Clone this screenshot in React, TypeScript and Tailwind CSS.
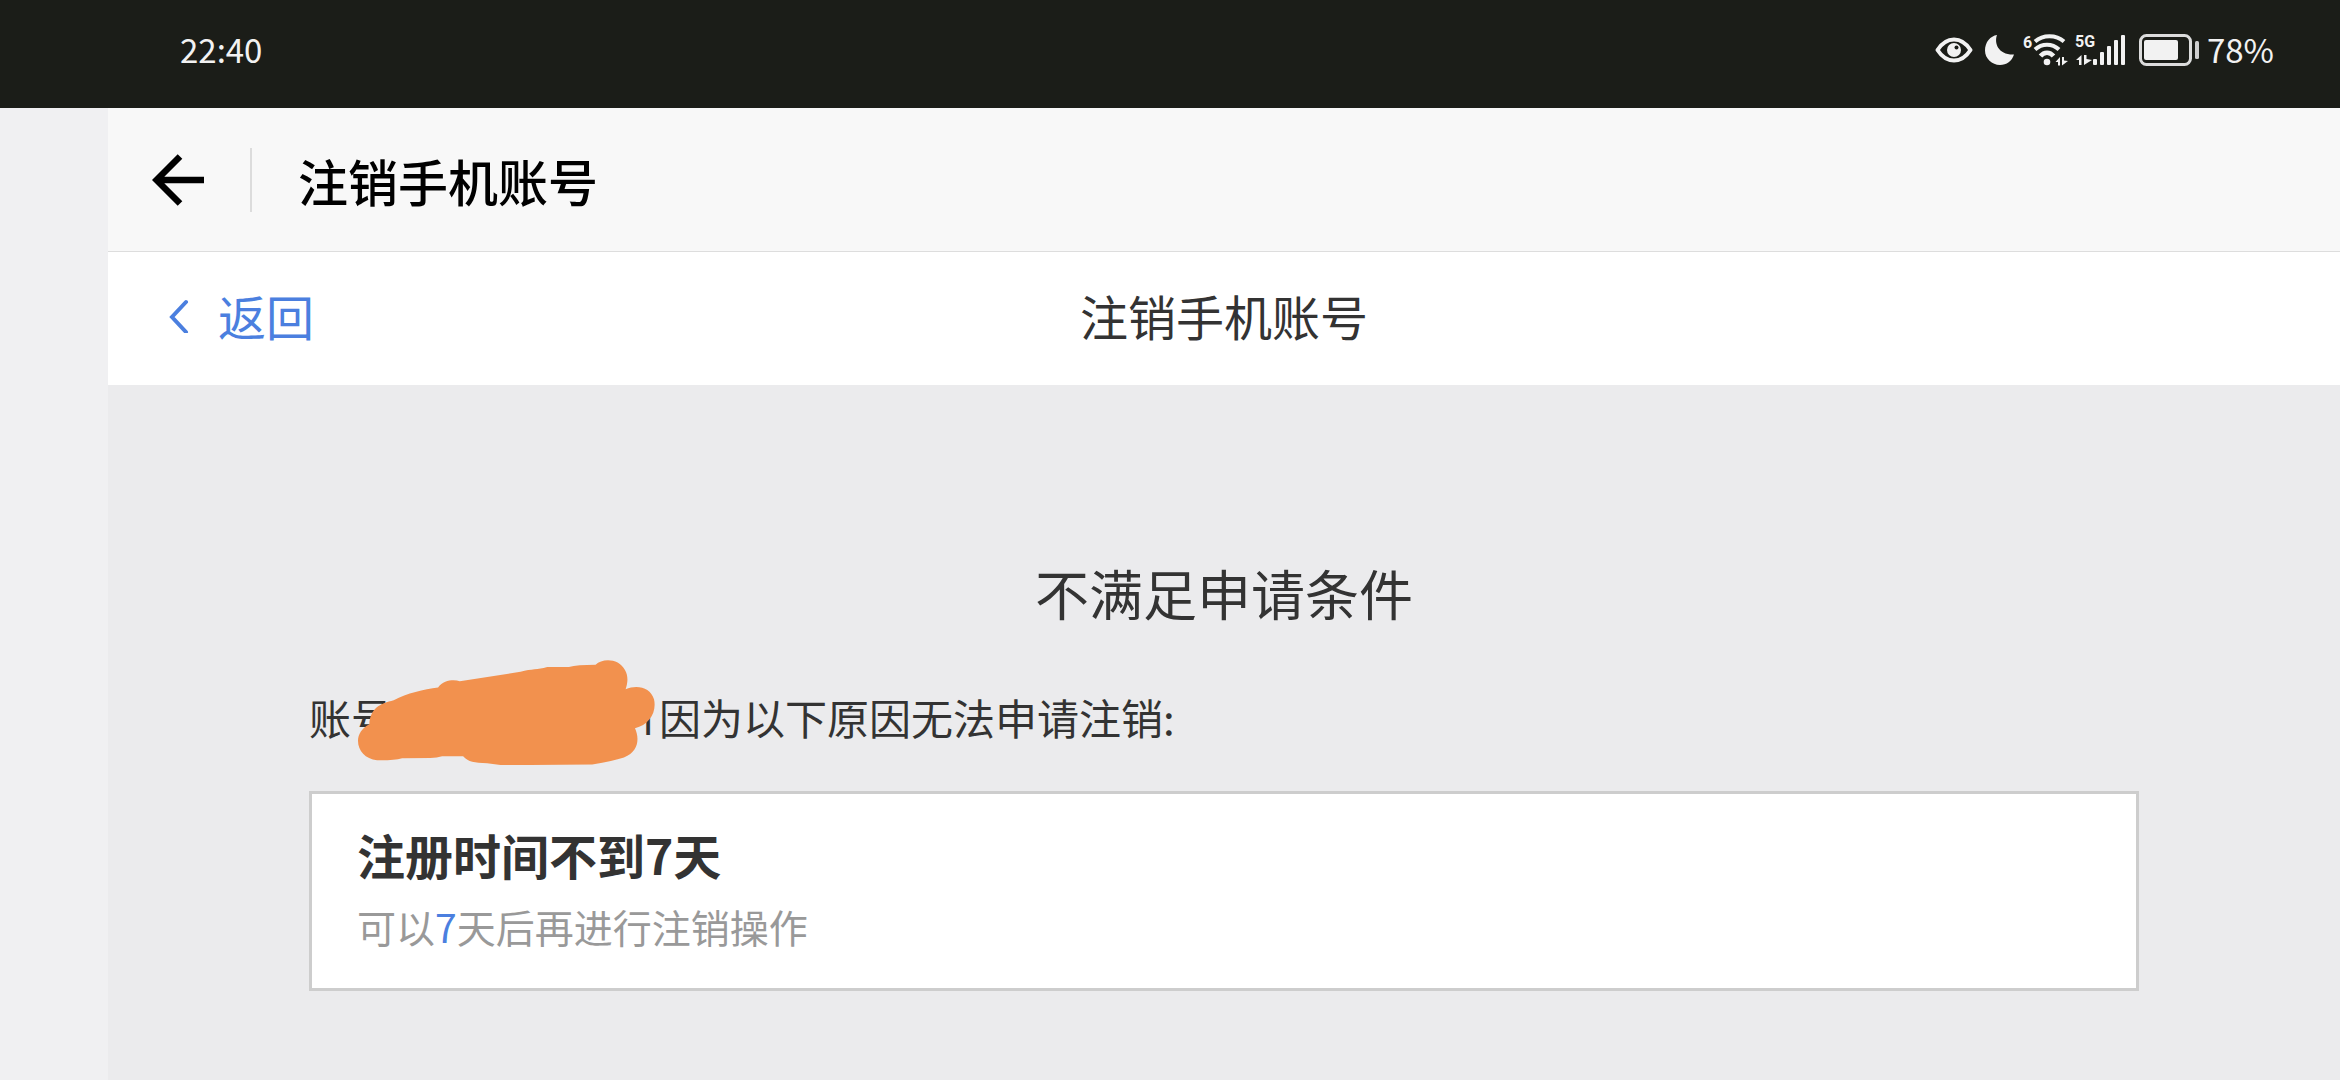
function StatusIcons() {
  return (
    <div className="flex items-center text-[#f2f2f2]">
      {/* eye */}
      <svg className="w-[38px] h-8 mr-3" viewBox="0 0 38 32" fill="none" role="img" aria-label="护眼">
        <path d="M2.500 16C7 9 12.500 5.500 19 5.500S31 9 35.500 16C31 23 25.500 26.500 19 26.500S7 23 2.500 16Z" stroke="currentColor" strokeWidth="4" strokeLinejoin="round" />
        <circle cx="19" cy="16" r="7" fill="currentColor" />
        <circle cx="21.500" cy="13.500" r="2" fill="#1b1d18" />
      </svg>
      {/* moon */}
      <svg className="w-[30px] h-8 mr-2" viewBox="0 0 30 32" fill="currentColor" role="img" aria-label="勿扰">
        <path d="M12 1C9 9 13 21 29 20.500C27 27 21.500 31 15 31C7 31 0 24.500 0 16.500C0 8 5.500 2 12 1Z" />
      </svg>
      {/* wifi */}
      <svg className="w-[44px] h-8 mr-2 overflow-visible" viewBox="0 0 44 32" fill="none" role="img" aria-label="WLAN">
        <text x="0" y="14" fill="currentColor" className="text-[16px] font-bold font-['Roboto',sans-serif]">6</text>
        <path d="M12 7.500C20 0.500 33 0.500 41 7.500" stroke="currentColor" strokeWidth="4" />
        <path d="M12 15.500C19 9 29 9 36 15.500" stroke="currentColor" strokeWidth="4" />
        <path d="M17.500 22C21 17.500 27 17.500 30.500 22" stroke="currentColor" strokeWidth="4.500" />
        <circle cx="24" cy="28" r="3.300" fill="currentColor" />
        <path d="M32.500 28L37 23V31.500H35V28ZM39 23H41V26.500L45 27L39 31.500Z" fill="currentColor" />
      </svg>
      {/* 5G signal */}
      <svg className="w-[52px] h-8 mr-3 overflow-visible" viewBox="0 0 52 32" fill="currentColor" role="img" aria-label="5G">
        <text x="0" y="13" className="text-[16px] font-bold font-['Roboto',sans-serif]">5G</text>
        <path d="M1 26L6.500 21V31H4V26ZM9 21H11.500V25L17 26L9 31Z" />
        <rect x="18" y="25" width="4" height="6" rx="1" />
        <rect x="25" y="18" width="4" height="13" rx="1" />
        <rect x="32" y="12" width="4" height="19" rx="1" />
        <rect x="39" y="6" width="4" height="25" rx="1" />
        <rect x="46" y="1" width="4" height="30" rx="1" />
      </svg>
      {/* battery */}
      <svg className="w-[60px] h-8 mr-2" viewBox="0 0 60 32" fill="none" role="img" aria-label="电量">
        <rect x="1.500" y="1.500" width="50" height="29" rx="6" stroke="#dcdcdc" strokeWidth="3" />
        <rect x="5" y="6" width="34" height="20" rx="2" fill="currentColor" />
        <rect x="56" y="7" width="4" height="18" rx="1.500" fill="#cfcfcf" />
      </svg>
      <span>78%</span>
    </div>
  );
}

function Scribble() {
  return (
    <svg
      className="absolute -left-9 -top-7 w-[299px] h-[107px] max-w-none"
      viewBox="200 55 896 320"
      fill="#f2914e"
      aria-hidden="true"
    >
      <path d="M237 250C240 200 270 188 310 178C350 157 400 146 443 140C460 117 490 116 508 121L690 93C725 84 740 88 770 79L835 79Q860 72 915 72C935 52 985 52 1003 88C1013 105 1012 125 1005 145C1040 130 1080 140 1090 175C1099 215 1075 252 1033 262C1046 290 1046 332 1000 350Q960 362 905 371Q760 373 630 372L590 367C550 365 535 364 518 346L455 346Q440 351 420 351L335 352Q310 359 260 358C225 355 203 330 203 300C203 280 215 262 237 250Z" />
    </svg>
  );
}

function App() {
  return (
    <div className="min-h-screen flex flex-col bg-[#ebebed] text-[#333333] font-['Noto_Sans_CJK_SC',sans-serif]">
      <div className="h-[108px] shrink-0 bg-[#1b1d18] text-[#f2f2f2] pl-[180px] pr-[66px] pb-2 flex items-center justify-between text-[33px]">
        <span>22:40</span>
        <StatusIcons />
      </div>

      <div className="flex-1 flex">
        <div className="w-[108px] shrink-0 bg-[#f0f0f2]" />

        <div className="flex-1">
          <header className="h-36 bg-[#f8f8f8] border-b border-[#dddddd] flex items-center text-black">
            <button type="button" aria-label="后退" className="ml-11">
              <svg className="w-[54px] h-[54px]" viewBox="0 0 54 54" fill="none" stroke="currentColor" strokeWidth="6.500">
                <path d="M28 3.500L4.500 27L28 50.500M5 27H52" />
              </svg>
            </button>
            <div className="w-0.5 h-16 bg-[#dcdcdc] ml-11" />
            <h1 className="ml-[46px] text-[50px] leading-[60px] font-medium">注销手机账号</h1>
          </header>

          <nav className="h-[133px] pb-2 bg-white grid grid-cols-3 items-center text-[48px] leading-[60px]">
            <a href="#" className="flex items-center text-[#4b7fdf] pl-[60px]">
              <svg className="w-6 h-9 mr-[26px]" viewBox="0 0 24 36" fill="none" stroke="currentColor" strokeWidth="4" strokeLinecap="round">
                <path d="M18 5L4 20L18 35" />
              </svg>
              返回
            </a>
            <h2 className="text-center whitespace-nowrap">注销手机账号</h2>
          </nav>

          <main className="px-[201px] pt-[168px]">
            <h2 className="text-center text-[54px] leading-[80px]">不满足申请条件</h2>

            <p className="mt-[54px] text-[42px] leading-[60px]">
              账号
              <span className="relative inline-block w-[242px] h-[60px] align-top">
                <Scribble />
              </span>
              <span className="font-['Noto_Sans',sans-serif]">1</span>
              因为以下原因无法申请注销:
            </p>

            <section className="mt-[42px] bg-white border-[3px] border-[#cdcdcd] px-[45px] pt-[30px] pb-8">
              <h3 className="text-[48px] leading-[60px] font-bold">注册时间不到7天</h3>
              <p className="mt-3 text-[39px] leading-[60px] text-[#999999]">
                可以<span className="text-[#4b7fdf]">7</span>天后再进行注销操作
              </p>
            </section>
          </main>
        </div>
      </div>
    </div>
  );
}

export default App;
